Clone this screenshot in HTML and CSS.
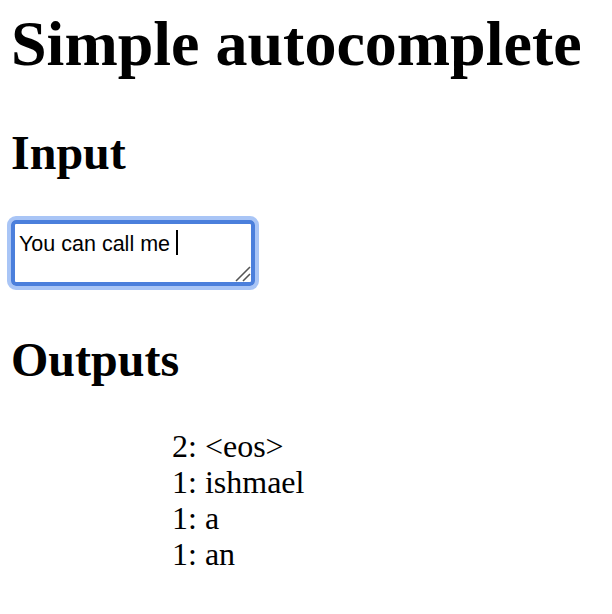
FILE: index.html
```html
<!DOCTYPE html>
<html lang="en">
<head>
    <meta charset="UTF-8">
    <title>Simple autocomplete</title>
    <link rel="stylesheet" href="styles.css">
</head>
<body>
    <h1>Simple autocomplete</h1>

    <h2>Input</h2>
    <div class="input-wrap">
        <div class="input-box" role="textbox">You can call me <span class="caret"></span></div>
        <svg class="grip" width="16" height="16" viewBox="0 0 16 16">
            <line x1="1" y1="15" x2="15" y2="1" />
            <line x1="8" y1="15" x2="15" y2="8" />
        </svg>
    </div>

    <h2 class="outputs-title">Outputs</h2>
    <ul class="outputs">
        <li>2: &lt;eos&gt;</li>
        <li>1: ishmael</li>
        <li>1: a</li>
        <li>1: an</li>
    </ul>
</body>
</html>
```

FILE: styles.css
```css
body {
    margin: 0;
    padding: 0 11px;
    background-color: #ffffff;
    color: #000000;
    font-family: "Liberation Serif", "Times New Roman", serif;
    font-size: 32px;
}

h1 {
    font-size: 64px;
    line-height: 74px;
    margin: 7px 0 44px;
}

h2 {
    font-size: 48px;
    line-height: 55px;
    margin: 0 0 40px;
}

.input-wrap {
    position: relative;
    width: 244px;
}

.input-box {
    box-sizing: border-box;
    height: 66px;
    padding: 6px 4px;
    border: 4px solid #4b7fdc;
    border-radius: 5px;
    box-shadow: 0 0 0 4px #a9c5f6;
    font-family: "Liberation Sans", Arial, sans-serif;
    font-size: 21.5px;
    line-height: 25px;
}

.caret {
    display: inline-block;
    width: 2px;
    height: 25px;
    vertical-align: -4px;
    background-color: #000000;
}

.grip {
    position: absolute;
    right: 4px;
    bottom: 4px;
}

.grip line {
    stroke: #555555;
    stroke-width: 1.6;
}

.outputs-title {
    margin-top: 46px;
    margin-bottom: 41px;
}

.outputs {
    list-style: none;
    margin: 0;
    padding-left: 161px;
    line-height: 36px;
}
```
